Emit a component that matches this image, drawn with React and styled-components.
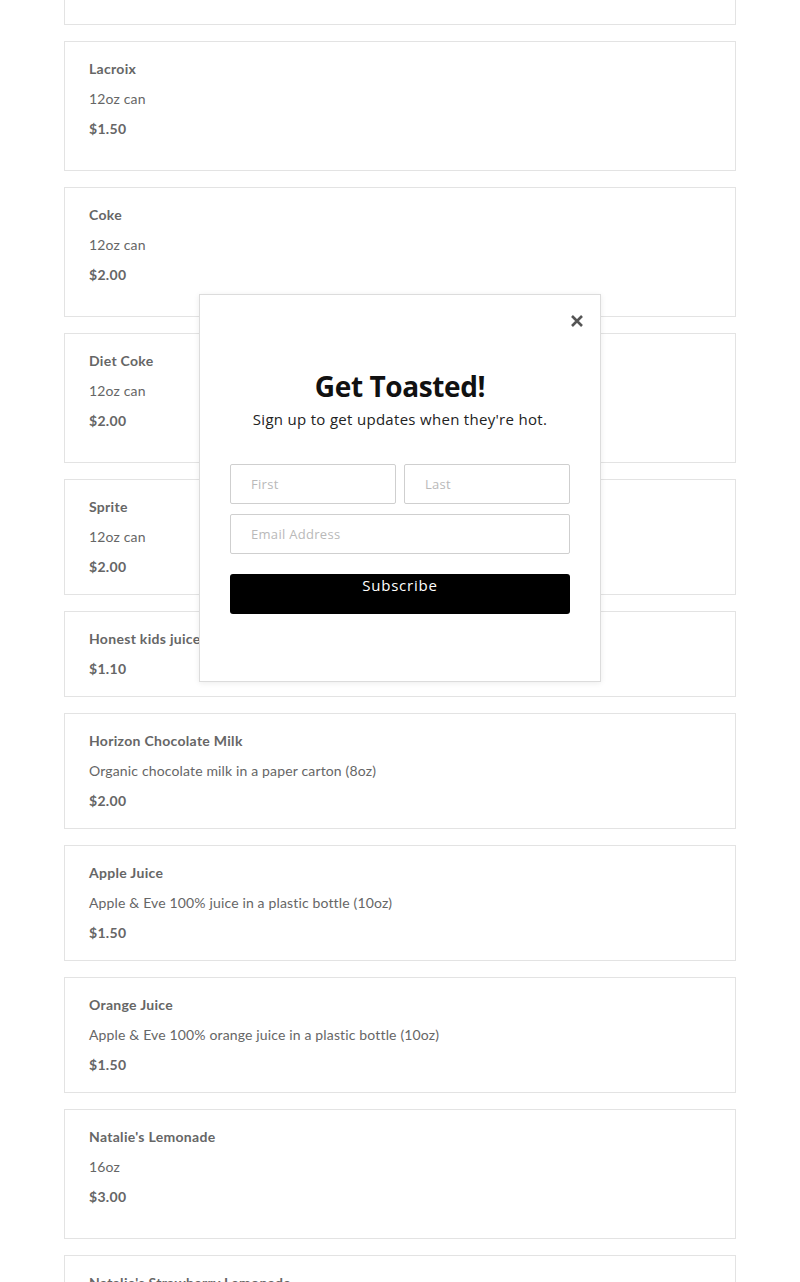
import React from 'react';
import styled, {createGlobalStyle} from 'styled-components';

const Global = createGlobalStyle`
  html, body {
    margin: 0;
    padding: 0;
    background: #fff;
  }
  body {
    font-family: Lato, "Liberation Sans", sans-serif;
  }
`;

const Page = styled.div`
  position: relative;
  height: 1282px;
  overflow: hidden;
`;

const List = styled.ul`
  list-style: none;
  margin: 0;
  padding: 0 64px;
  display: flex;
  flex-direction: column;
  gap: 16px;
`;

const Card = styled.li`
  border: 1px solid #e3e3e3;
  padding: 12px 24px ${p => (p.$tall ? 26 : 12)}px;
  color: #666;
  font-size: 14px;
  letter-spacing: 0.3px;
`;

// bottom of the card that has scrolled past the top edge
const CardTail = styled(Card)`
  border-top: none;
  height: 25px;
  padding: 0;
  box-sizing: border-box;
`;

const Name = styled.div`
  font-weight: 700;
  line-height: 30px;
`;

const Desc = styled.div`
  line-height: 30px;
  font-weight: 400;
  letter-spacing: 0.15px;
`;

const Price = styled.div`
  font-weight: 700;
  line-height: 30px;
`;

const Modal = styled.div`
  position: absolute;
  left: 199px;
  top: 294px;
  width: 340px;
  height: 326px;
  padding: 30px;
  background: #fff;
  border: 1px solid #dcdcdc;
  box-shadow: 0 1px 6px rgba(0, 0, 0, 0.08);
  font-family: "Open Sans", sans-serif;
  text-align: center;
`;

const Close = styled.button`
  position: absolute;
  top: 16px;
  right: 13px;
  width: 20px;
  height: 20px;
  padding: 0;
  border: none;
  background: none;
  color: #555;
  display: flex;
  align-items: center;
  justify-content: center;
`;

const Title = styled.h2`
  margin: 44px 0 0;
  font-size: 28px;
  line-height: 34px;
  font-weight: 700;
  color: #111;
  letter-spacing: -0.4px;
`;

const Sub = styled.p`
  margin: 4px 0 0;
  font-size: 15px;
  line-height: 24px;
  color: #222;
  letter-spacing: 0.3px;
`;

const Form = styled.div`
  margin-top: 33px;
  display: flex;
  flex-direction: column;
  gap: 10px;
`;

const Row = styled.div`
  display: flex;
  gap: 8px;
`;

const Field = styled.div`
  flex: ${p => (p.$half ? 1 : 'none')};
  height: 38px;
  border: 1px solid #cfcfcf;
  border-radius: 2px;
  display: flex;
  align-items: center;
  padding-left: 20px;
  font-size: 13px;
  color: #b9b9b9;
  letter-spacing: 0.3px;
  text-align: left;
`;

const Button = styled.button`
  margin-top: 10px;
  height: 40px;
  border: none;
  border-radius: 3px;
  background: #000;
  color: #fff;
  font-family: "Open Sans", sans-serif;
  font-size: 15px;
  letter-spacing: 0.8px;
  padding: 0 0 18px;
  line-height: 22px;
`;

const drinks = [
  {name: 'Lacroix', desc: '12oz can', price: '$1.50', tall: true},
  {name: 'Coke', desc: '12oz can', price: '$2.00', tall: true},
  {name: 'Diet Coke', desc: '12oz can', price: '$2.00', tall: true},
  {name: 'Sprite', desc: '12oz can', price: '$2.00'},
  {name: 'Honest kids juice', price: '$1.10'},
  {name: 'Horizon Chocolate Milk', desc: 'Organic chocolate milk in a paper carton (8oz)', price: '$2.00'},
  {name: 'Apple Juice', desc: 'Apple & Eve 100% juice in a plastic bottle (10oz)', price: '$1.50'},
  {name: 'Orange Juice', desc: 'Apple & Eve 100% orange juice in a plastic bottle (10oz)', price: '$1.50'},
  {name: "Natalie's Lemonade", desc: '16oz', price: '$3.00', tall: true},
  {name: "Natalie's Strawberry Lemonade"},
];

export default function App() {
  return (
    <Page>
      <Global />
      <List>
        <CardTail />
        {drinks.map(d => (
          <Card key={d.name} $tall={d.tall}>
            <Name>{d.name}</Name>
            {d.desc && <Desc>{d.desc}</Desc>}
            {d.price && <Price>{d.price}</Price>}
          </Card>
        ))}
      </List>
      <Modal>
        <Close aria-label="close">
          <svg width="14" height="14" viewBox="0 0 14 14">
            <path d="M2 2L12 12M12 2L2 12" stroke="currentColor" strokeWidth="2.6" />
          </svg>
        </Close>
        <Title>Get Toasted!</Title>
        <Sub>Sign up to get updates when they're hot.</Sub>
        <Form>
          <Row>
            <Field $half>First</Field>
            <Field $half>Last</Field>
          </Row>
          <Field>Email Address</Field>
          <Button>Subscribe</Button>
        </Form>
      </Modal>
    </Page>
  );
}
